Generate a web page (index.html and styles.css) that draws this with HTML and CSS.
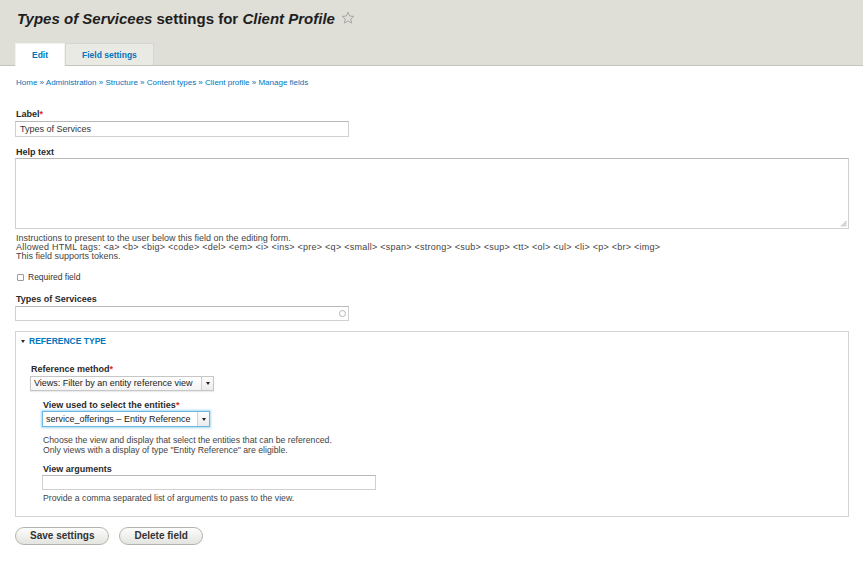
FILE: index.html
```html
<!DOCTYPE html>
<html>
<head>
<meta charset="utf-8">
<title>Types of Servicees settings for Client Profile</title>
<link rel="stylesheet" href="styles.css">
</head>
<body>
<div class="header">
  <h1 class="title"><em>Types of Servicees</em> settings for <em>Client Profile</em><svg class="star" width="14" height="14" viewBox="0 0 14 14"><path d="M7 1.2 L8.7 5 L12.8 5.3 L9.7 8 L10.6 12.1 L7 9.9 L3.4 12.1 L4.3 8 L1.2 5.3 L5.3 5 Z" fill="none" stroke="#a9a9a4" stroke-width="1" stroke-linejoin="round"/></svg></h1>
  <ul class="tabs">
    <li class="tab active">Edit</li>
    <li class="tab">Field settings</li>
  </ul>
</div>
<div class="content">
  <div class="breadcrumb"><a href="#">Home</a> » <a href="#">Administration</a> » <a href="#">Structure</a> » <a href="#">Content types</a> » <a href="#">Client profile</a> » <a href="#">Manage fields</a></div>

  <div class="item item-label">
    <label class="lbl">Label<span class="req">*</span></label>
    <div class="input w334">Types of Services</div>
  </div>

  <div class="item item-help">
    <label class="lbl">Help text</label>
    <div class="textarea"><svg class="grip" width="7" height="7" viewBox="0 0 7 7"><path d="M6.5 1 L1 6.5 M6.5 3 L3 6.5 M6.5 5 L5 6.5" stroke="#9a9a9a" stroke-width="0.8"/></svg></div>
    <div class="desc desc-help">Instructions to present to the user below this field on the editing form.<br><span class="tags">Allowed HTML tags: &lt;a&gt; &lt;b&gt; &lt;big&gt; &lt;code&gt; &lt;del&gt; &lt;em&gt; &lt;i&gt; &lt;ins&gt; &lt;pre&gt; &lt;q&gt; &lt;small&gt; &lt;span&gt; &lt;strong&gt; &lt;sub&gt; &lt;sup&gt; &lt;tt&gt; &lt;ol&gt; &lt;ul&gt; &lt;li&gt; &lt;p&gt; &lt;br&gt; &lt;img&gt;</span><br>This field supports tokens.</div>
  </div>

  <div class="check-row"><span class="checkbox"></span><span>Required field</span></div>

  <div class="item item-types">
    <label class="lbl">Types of Servicees</label>
    <div class="input w334 h15 throbber-input"><span class="throbber"></span></div>
  </div>

  <div class="fieldset">
    <div class="legend"><span class="tri"></span>REFERENCE TYPE</div>
    <div class="fs-body">
      <div class="item item-method">
        <label class="lbl">Reference method<span class="req">*</span></label>
        <div class="select sel-method"><span class="val">Views: Filter by an entity reference view</span><span class="arr"></span></div>
      </div>
      <div class="nested">
        <div class="item item-view">
          <label class="lbl">View used to select the entities<span class="req">*</span></label>
          <div class="select sel-view focused"><span class="val">service_offerings – Entity Reference</span><span class="arr"></span></div>
          <div class="desc desc-view">Choose the view and display that select the entities that can be referenced.<br>Only views with a display of type "Entity Reference" are eligible.</div>
        </div>
        <div class="item item-args">
          <label class="lbl lbl-args">View arguments</label>
          <div class="input w334 h15"></div>
          <div class="desc desc-args">Provide a comma separated list of arguments to pass to the view.</div>
        </div>
      </div>
    </div>
  </div>

  <div class="actions">
    <button class="btn">Save settings</button>
    <button class="btn">Delete field</button>
  </div>
</div>
</body>
</html>
```

FILE: styles.css
```css
* { box-sizing: border-box; }

body {
  margin: 0;
  font-family: "Liberation Sans", Arial, sans-serif;
  color: #333;
  background: #fff;
}

/* Header */
.header {
  background: #dfdfd7;
  border-bottom: 1px solid #c4c4be;
  padding-top: 10px;
}

.title {
  margin: 0 0 15px 17px;
  font-size: 15px;
  line-height: 18px;
  font-weight: bold;
  color: #1e1e1e;
  white-space: nowrap;
}

.title em { font-style: italic; }

.star {
  margin-left: 6px;
  vertical-align: -1px;
}

.tabs {
  display: flex;
  align-items: flex-start;
  list-style: none;
  margin: 0 0 0 15px;
  padding: 0;
  height: 22px;
}

.tab {
  height: 22px;
  line-height: 22px;
  padding: 0 16px;
  font-size: 8.5px;
  font-weight: bold;
  color: #0074bd;
  background: #eaeae5;
  border: 1px solid #d6d6d0;
  border-bottom: none;
}

.tab.active {
  background: #fff;
  border-color: #f2f2ee;
  height: 23px;
}

/* Content */
.content {
  padding: 0 14px 20px 15px;
}

.breadcrumb {
  margin-top: 12px;
  padding-left: 1px;
  font-size: 8px;
  line-height: 10px;
  color: #0074bd;
}

.breadcrumb a {
  color: #0074bd;
  text-decoration: none;
}

.lbl {
  display: block;
  font-size: 9px;
  font-weight: bold;
  line-height: 12px;
  padding-left: 1px;
  color: #2a2a2a;
}

.req { color: #e0281f; }

.input {
  height: 16px;
  border: 1px solid #d0d0d0;
  border-top-color: #b8b8b8;
  background: #fff;
  font-size: 9px;
  line-height: 14px;
  padding: 0 4px;
  color: #333;
}

.w334 { width: 334px; }
.h15 { height: 15px; }

.item-label { margin-top: 20px; }
.item-label .input { margin-top: 1px; }

.item-help { margin-top: 9px; }

.textarea {
  height: 71px;
  border: 1px solid #d0d0d0;
  border-top-color: #b8b8b8;
  display: flex;
  align-items: flex-end;
  justify-content: flex-end;
  padding: 0 1px 1px 0;
}

.desc {
  font-size: 9px;
  line-height: 9px;
  color: #444;
  padding-left: 1px;
}

.desc-help { margin-top: 5px; }

.tags { letter-spacing: 0.25px; }

.check-row {
  margin-top: 10px;
  height: 12px;
  display: flex;
  align-items: center;
  gap: 4px;
  padding-left: 2px;
  font-size: 8.5px;
  color: #333;
}

.checkbox {
  width: 7px;
  height: 7px;
  border: 1px solid #9a9a9a;
  border-radius: 1px;
  background: #fff;
}

.item-types { margin-top: 10px; }
.item-types .input { margin-top: 1px; }

.throbber-input {
  display: flex;
  align-items: center;
  justify-content: flex-end;
  padding-right: 2px;
}

.throbber {
  width: 7px;
  height: 7px;
  border: 1px solid #b5b5b5;
  border-radius: 50%;
}

/* Fieldset */
.fieldset {
  margin-top: 10px;
  border: 1px solid #d4d4d4;
  padding: 3px 0 13px 0;
}

.legend {
  display: flex;
  align-items: center;
  height: 12px;
  padding-left: 5px;
  font-size: 8.5px;
  font-weight: bold;
  color: #0074bd;
}

.tri {
  width: 0;
  height: 0;
  border-left: 2.5px solid transparent;
  border-right: 2.5px solid transparent;
  border-top: 3px solid #2a2a2a;
  margin-right: 4px;
}

.fs-body { padding-left: 14px; }

.item-method { margin-top: 16px; }
.item-method .select { margin-top: 1px; }

.select {
  display: flex;
  height: 15px;
  border: 1px solid #c6c6c6;
  background: linear-gradient(#ffffff, #f4f4f4);
  font-size: 9px;
  line-height: 13px;
  box-shadow: 0 1px 1px rgba(0, 0, 0, 0.08);
}

.select .val {
  flex: 1;
  padding: 0 3px;
  white-space: nowrap;
  overflow: hidden;
  color: #222;
}

.select .arr {
  width: 12px;
  border-left: 1px solid #d0d0d0;
  display: flex;
  align-items: center;
  justify-content: center;
  background: linear-gradient(#fdfdfd, #ececec);
}

.select .arr::after {
  content: "";
  border-left: 2.5px solid transparent;
  border-right: 2.5px solid transparent;
  border-top: 3px solid #222;
}

.sel-method { width: 184px; }

.sel-view {
  width: 168px;
  height: 16px;
  line-height: 14px;
}

.select.focused {
  border-color: #6db6e3;
  box-shadow: 0 0 2px 1px #a8d6f2;
  background: #fff;
}

.nested { padding-left: 12px; }

.item-view { margin-top: 8px; }

.desc-view {
  margin-top: 8px;
  line-height: 10px;
  font-size: 8.7px;
}

.item-args { margin-top: 9px; }

.lbl-args { line-height: 11px; }

.desc-args {
  margin-top: 3px;
  line-height: 10px;
  font-size: 8.7px;
}

/* Buttons */
.actions {
  margin-top: 10px;
  display: flex;
  gap: 10px;
}

.btn {
  height: 18px;
  padding: 0 14px;
  border: 1px solid #b4b4ae;
  border-radius: 10px;
  background: linear-gradient(#fdfdfd, #e3e3df);
  font-family: "Liberation Sans", Arial, sans-serif;
  font-size: 10px;
  font-weight: bold;
  color: #333;
  line-height: 16px;
}
```
